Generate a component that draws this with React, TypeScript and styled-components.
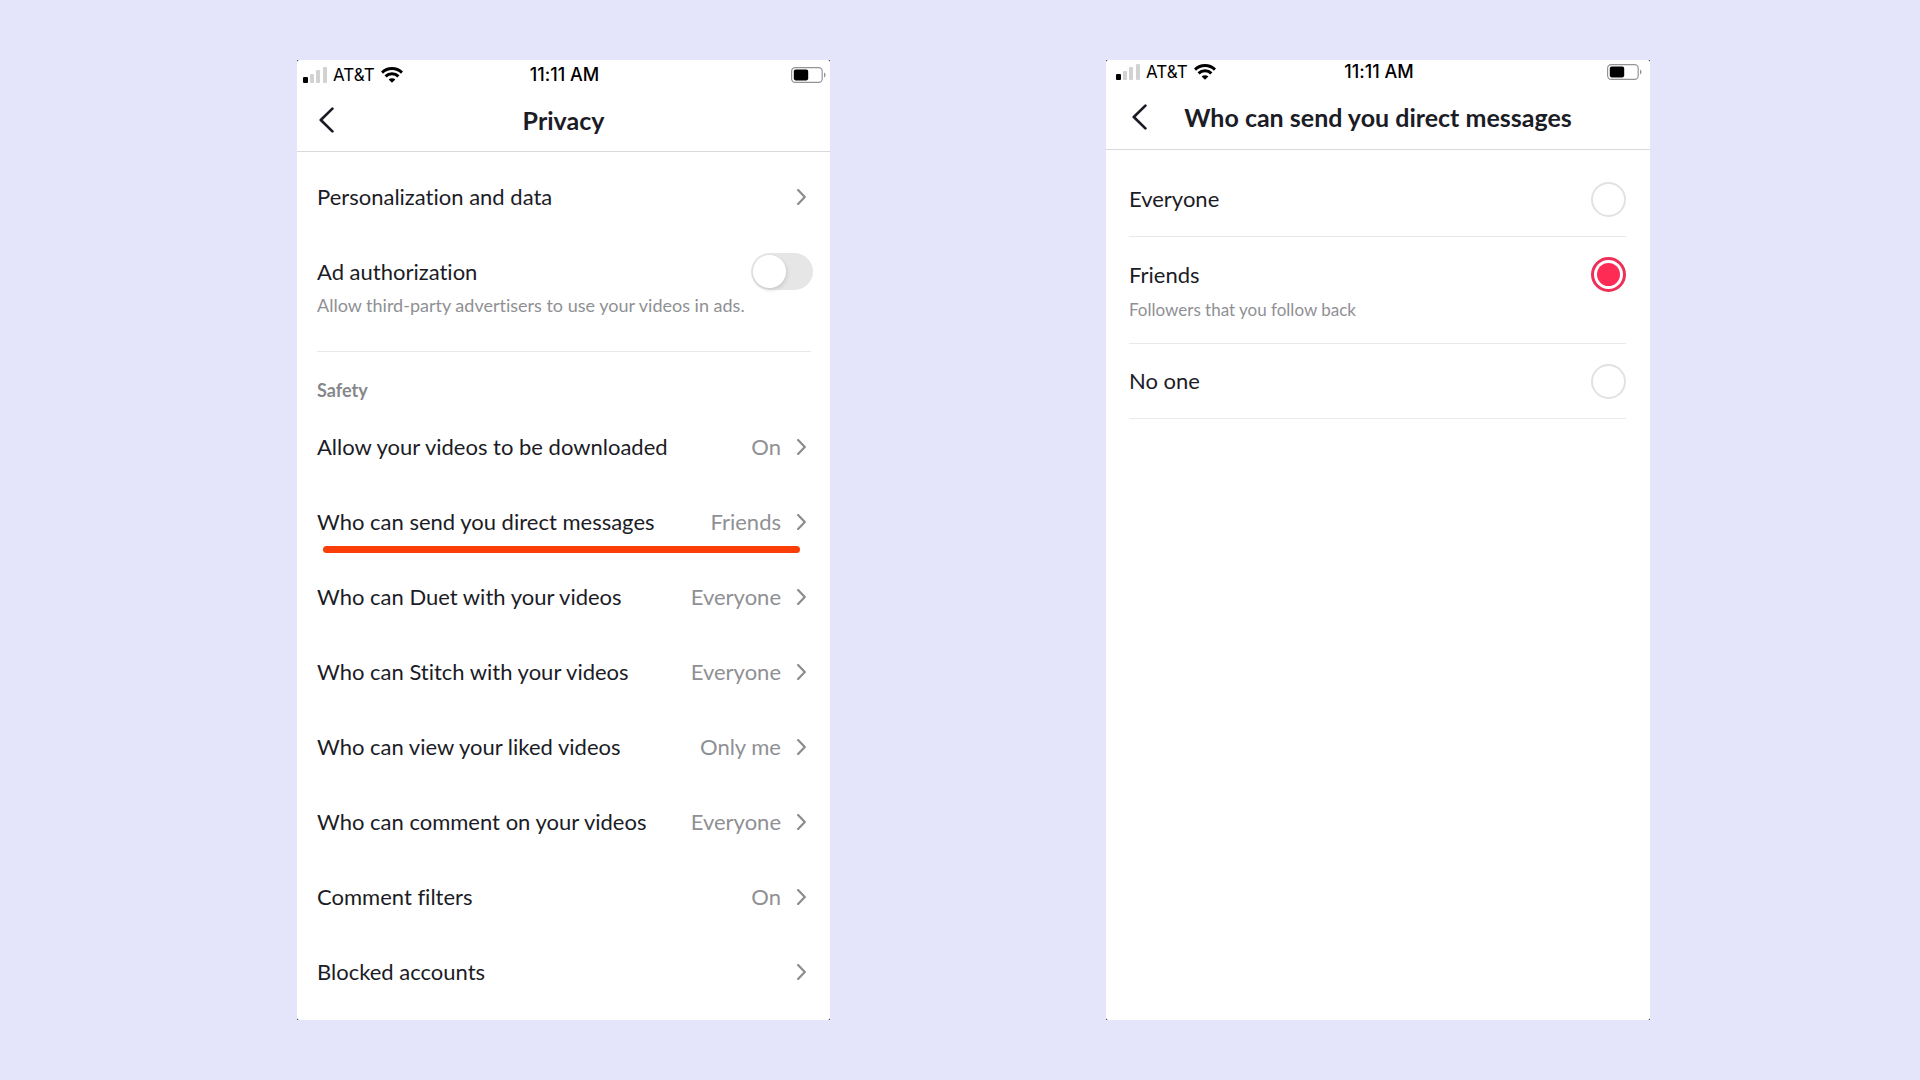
import React, { useState } from "react";
import styled, { createGlobalStyle, css } from "styled-components";

const GlobalStyle = createGlobalStyle`
  *, *::before, *::after { box-sizing: border-box; }
  body {
    margin: 0;
    background: #e4e4fb;
    color: #1b1c26;
    font-family: Lato, "Liberation Sans", sans-serif;
    font-variant-ligatures: none;
  }
  h1, h2, p, ul { margin: 0; padding: 0; }
  button, input { font: inherit; color: inherit; }
`;

const Page = styled.main`
  display: grid;
  grid-template-columns: 297fr 533fr 276fr 544fr 270fr;
  min-height: 100vh;
  padding: 60px 0;
`;

const Frame = styled.div<{ $column: number }>`
  grid-column: ${(p) => p.$column};
  display: grid;
  background: #000;
`;

const Screen = styled.section`
  background: #fff;
  border-radius: 2px;
`;

const StatusBar = styled.div<{ $compact?: boolean }>`
  display: grid;
  grid-template-columns: 1fr auto 1fr;
  align-items: center;
  height: ${(p) => (p.$compact ? 24 : 28)}px;
  padding: ${(p) => (p.$compact ? "0 8px 0 10px" : "2px 4px 0 6px")};
  color: #000;
  font-family: Inter, "Liberation Sans", sans-serif;
  font-size: 17px;
  line-height: 20px;
`;

const Carrier = styled.div`
  display: flex;
  align-items: center;
  gap: 6px;
`;

const Time = styled.time`
  font-size: 18px;
  font-weight: 500;
`;

const BatterySlot = styled.div`
  display: flex;
  justify-content: flex-end;
`;

const Header = styled.header<{ $tall?: boolean }>`
  display: grid;
  grid-template-columns: 72px 1fr 72px;
  align-items: center;
  height: ${(p) => (p.$tall ? 66 : 64)}px;
  border-bottom: 1px solid #d9d9dc;
`;

const BackButton = styled.button<{ $inset: number }>`
  display: flex;
  justify-self: start;
  margin-left: ${(p) => p.$inset}px;
  padding: 0;
  border: 0;
  background: none;
  cursor: pointer;
`;

const Title = styled.h1`
  text-align: center;
  font-size: 25px;
  line-height: 32px;
  font-weight: 700;
  white-space: nowrap;
`;

const rowText = css`
  font-size: 22px;
  line-height: 28px;
`;

const RowButton = styled.button`
  ${rowText}
  position: relative;
  display: flex;
  align-items: center;
  width: 100%;
  height: 75px;
  padding: 0 24px 0 20px;
  border: 0;
  background: none;
  text-align: left;
  cursor: pointer;
`;

const RowLabel = styled.span`
  flex: 1;
`;

const RowValue = styled.span`
  margin-right: 16px;
  color: #8f9094;
`;

const Highlight = styled.span`
  position: absolute;
  left: 26px;
  right: 30px;
  bottom: 6px;
  height: 7px;
  border-radius: 4px;
  background: #fb3e08;
`;

const List = styled.ul`
  list-style: none;
`;

const General = styled.div`
  padding-top: 7px;
`;

const ToggleRow = styled.div`
  display: flex;
  align-items: center;
  justify-content: space-between;
  height: 75px;
  padding: 0 17px 0 20px;
`;

const ToggleLabel = styled.label`
  ${rowText}
`;

const Switch = styled.input`
  appearance: none;
  display: grid;
  align-items: center;
  width: 62px;
  height: 37px;
  margin: 0;
  padding: 2px;
  border-radius: 19px;
  background: #e6e6e6;
  cursor: pointer;

  &::before {
    content: "";
    width: 33px;
    height: 33px;
    border-radius: 50%;
    background: #fff;
    box-shadow: 1px 2px 4px rgba(0, 0, 0, 0.12);
  }

  &:checked { background: #20d5ec; }
  &:checked::before { justify-self: end; }
`;

const AdHint = styled.p`
  height: 59px;
  margin: -16px 19px 0 20px;
  border-bottom: 1px solid #e9e9ea;
  color: #8f9094;
  font-size: 18px;
  line-height: 24px;
`;

const SectionTitle = styled.h2`
  padding: 26px 20px 7px;
  color: #86878b;
  font-size: 18px;
  line-height: 24px;
  font-weight: 700;
`;

const Options = styled.div`
  padding: 12px 24px 0 23px;
`;

const Option = styled.label`
  display: grid;
  grid-template-columns: 1fr auto;
  align-items: center;
  min-height: 75px;
  border-bottom: 1px solid #e9e9ea;
  cursor: pointer;
`;

const DetailedOption = styled(Option)`
  align-content: start;
  min-height: 107px;
  padding-top: 20px;
`;

const OptionName = styled.span`
  ${rowText}
`;

const OptionHint = styled.span`
  margin-top: 6px;
  color: #8f9094;
  font-size: 17px;
  line-height: 24px;
`;

const Radio = styled.input`
  appearance: none;
  display: grid;
  place-items: center;
  width: 35px;
  height: 35px;
  margin: 0;
  border: 2px solid #e2e2e3;
  border-radius: 50%;
  cursor: pointer;

  &:checked { border: 3px solid #ee3058; }
  &:checked::before {
    content: "";
    width: 23px;
    height: 23px;
    border-radius: 50%;
    background: #fe2c55;
  }
`;

const Signal = () => (
  <svg width="24" height="16" viewBox="0 0 24 16" aria-hidden="true">
    <rect x="0" y="10" width="5" height="6" rx="1" fill="#000" />
    <rect x="7" y="7" width="4" height="9" rx="1" fill="#d2d2d2" />
    <rect x="13" y="3" width="4" height="13" rx="1" fill="#d2d2d2" />
    <rect x="20" y="0" width="4" height="16" rx="1" fill="#d2d2d2" />
  </svg>
);

const Wifi = () => (
  <svg width="22" height="16" viewBox="0 0 22 16" aria-hidden="true">
    <g fill="none" stroke="#000" strokeWidth="3">
      <path d="M1 5.6 A14.4 14.4 0 0 1 21 5.6" />
      <path d="M4.6 9.3 A9.2 9.2 0 0 1 17.4 9.3" />
    </g>
    <path d="M11 15.8 L7.6 12.5 A4.9 4.9 0 0 1 14.4 12.5 Z" fill="#000" />
  </svg>
);

const Battery = () => (
  <svg width="35" height="16" viewBox="0 0 35 16" aria-hidden="true">
    <rect x="0.6" y="0.6" width="30.6" height="14.8" rx="3.6" fill="#fff" stroke="#949494" strokeWidth="1.2" />
    <rect x="2.8" y="2.6" width="14.4" height="10.8" rx="1.8" fill="#000" />
    <path d="M33 5.4 Q34.6 6.2 34.6 8 Q34.6 9.8 33 10.6 Z" fill="#949494" />
  </svg>
);

const BackIcon = () => (
  <svg width="15" height="26" viewBox="0 0 15 26" fill="none" aria-hidden="true">
    <path d="M13.4 1.6 L1.8 13 L13.4 24.4" stroke="#1b1c26" strokeWidth="2.7" strokeLinecap="round" strokeLinejoin="round" />
  </svg>
);

const Chevron = () => (
  <svg width="9" height="16" viewBox="0 0 9 16" fill="none" aria-hidden="true">
    <path d="M1.1 1.1 L7.8 8 L1.1 14.9" stroke="#8c8c8e" strokeWidth="2.2" strokeLinecap="round" strokeLinejoin="round" />
  </svg>
);

const PhoneStatus = ({ compact }: { compact?: boolean }) => (
  <StatusBar $compact={compact}>
    <Carrier>
      <Signal />
      <span>AT&amp;T</span>
      <Wifi />
    </Carrier>
    <Time>11:11 AM</Time>
    <BatterySlot>
      <Battery />
    </BatterySlot>
  </StatusBar>
);

type RowProps = { label: string; value?: string; highlighted?: boolean };

const Row = ({ label, value, highlighted }: RowProps) => (
  <RowButton type="button">
    <RowLabel>{label}</RowLabel>
    {value && <RowValue>{value}</RowValue>}
    <Chevron />
    {highlighted && <Highlight />}
  </RowButton>
);

const safetyRows: RowProps[] = [
  { label: "Allow your videos to be downloaded", value: "On" },
  { label: "Who can send you direct messages", value: "Friends", highlighted: true },
  { label: "Who can Duet with your videos", value: "Everyone" },
  { label: "Who can Stitch with your videos", value: "Everyone" },
  { label: "Who can view your liked videos", value: "Only me" },
  { label: "Who can comment on your videos", value: "Everyone" },
  { label: "Comment filters", value: "On" },
  { label: "Blocked accounts" },
];

const audiences = [
  { name: "Everyone" },
  { name: "Friends", hint: "Followers that you follow back" },
  { name: "No one" },
];

export default function App() {
  const [adsAllowed, setAdsAllowed] = useState(false);
  const [audience, setAudience] = useState("Friends");

  return (
    <>
      <GlobalStyle />
      <Page>
        <Frame $column={2}>
          <Screen>
            <PhoneStatus />
            <Header>
              <BackButton $inset={22} type="button" aria-label="Back">
                <BackIcon />
              </BackButton>
              <Title>Privacy</Title>
            </Header>
            <General>
              <Row label="Personalization and data" />
              <ToggleRow>
                <ToggleLabel htmlFor="ad-authorization">Ad authorization</ToggleLabel>
                <Switch
                  id="ad-authorization"
                  type="checkbox"
                  role="switch"
                  checked={adsAllowed}
                  onChange={(e) => setAdsAllowed(e.target.checked)}
                />
              </ToggleRow>
              <AdHint>Allow third-party advertisers to use your videos in ads.</AdHint>
            </General>
            <SectionTitle>Safety</SectionTitle>
            <List>
              {safetyRows.map((row) => (
                <li key={row.label}>
                  <Row {...row} />
                </li>
              ))}
            </List>
          </Screen>
        </Frame>
        <Frame $column={4}>
          <Screen>
            <PhoneStatus compact />
            <Header $tall>
              <BackButton $inset={26} type="button" aria-label="Back">
                <BackIcon />
              </BackButton>
              <Title>Who can send you direct messages</Title>
            </Header>
            <Options role="radiogroup" aria-label="Who can send you direct messages">
              {audiences.map(({ name, hint }) => {
                const Wrapper = hint ? DetailedOption : Option;
                return (
                  <Wrapper key={name}>
                    <OptionName>{name}</OptionName>
                    <Radio
                      type="radio"
                      name="audience"
                      value={name}
                      checked={audience === name}
                      onChange={() => setAudience(name)}
                    />
                    {hint && <OptionHint>{hint}</OptionHint>}
                  </Wrapper>
                );
              })}
            </Options>
          </Screen>
        </Frame>
      </Page>
    </>
  );
}
